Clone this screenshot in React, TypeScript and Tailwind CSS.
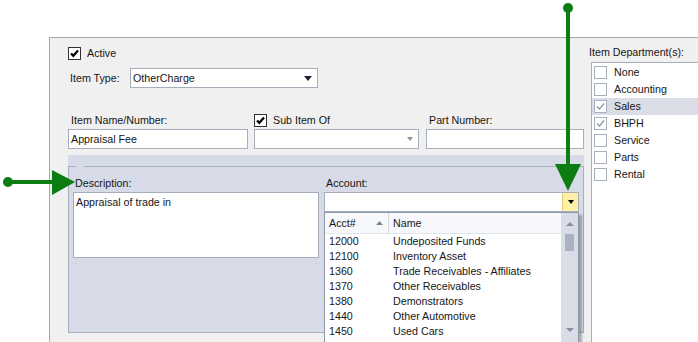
import React from "react"

const departments = [
  { name: "None", checked: false },
  { name: "Accounting", checked: false },
  { name: "Sales", checked: true, selected: true },
  { name: "BHPH", checked: true },
  { name: "Service", checked: false },
  { name: "Parts", checked: false },
  { name: "Rental", checked: false },
]

const accounts = [
  ["12000", "Undeposited Funds"],
  ["12100", "Inventory Asset"],
  ["1360", "Trade Receivables - Affiliates"],
  ["1370", "Other Receivables"],
  ["1380", "Demonstrators"],
  ["1440", "Other Automotive"],
  ["1450", "Used Cars"],
]

function CheckBox({ checked, muted }: { checked: boolean; muted?: boolean }) {
  return (
    <div
      className={`w-[13px] h-[13px] shrink-0 bg-white border ${
        muted ? "border-[#a9b0bd]" : "border-[#333333]"
      }`}
    >
      {checked && (
        <svg width="11" height="11" viewBox="0 0 11 11">
          {muted ? (
            <path d="M2 5.5 L4.5 8 L9 2.5" fill="none" stroke="#8c95a5" strokeWidth="1.2" />
          ) : (
            <path d="M2 5.5 L4.3 7.8 L9 2.5" fill="none" stroke="#000" strokeWidth="2.2" />
          )}
        </svg>
      )}
    </div>
  )
}

function Arrows() {
  return (
    <svg
      className="absolute inset-0 pointer-events-none"
      width="698"
      height="342"
      viewBox="0 0 698 342"
    >
      <g fill="#0c7d12" stroke="#0c7d12">
        <circle cx="568" cy="8" r="5" stroke="none" />
        <line x1="568" y1="8" x2="568" y2="168" strokeWidth="4" />
        <polygon points="555,164 581,164 568,191" stroke="none" />
        <circle cx="8" cy="182" r="5" stroke="none" />
        <line x1="8" y1="182" x2="54" y2="182" strokeWidth="4" />
        <polygon points="52,170 52,195 75,182" stroke="none" />
      </g>
    </svg>
  )
}

export default function App() {
  return (
    <div className="relative w-[698px] h-[342px] overflow-hidden bg-white pt-[37px] pl-[49px] font-['Liberation_Sans',Arial,sans-serif] text-[10.7px] leading-[13px] text-[#161616]">
      <div className="h-[305px] flex border-t border-l border-[#a3aab7] bg-[#f0f0f0]">
        {/* main form */}
        <div className="w-[534px] shrink-0 flex flex-col">
          <div className="mt-[9px] ml-[18px] h-[13px] flex items-center gap-[6px]">
            <CheckBox checked />
            <span>Active</span>
          </div>

          <div className="mt-[8px] ml-[20px] h-[20px] flex items-center">
            <span className="w-[60px]">Item Type:</span>
            <div className="w-[188px] h-[20px] flex items-center justify-between bg-white border border-[#a6aebb] pl-[2px] pr-[5px]">
              <span>OtherCharge</span>
              <svg width="8" height="5" viewBox="0 0 8 5">
                <polygon points="0,0 8,0 4,5" fill="#1c2533" />
              </svg>
            </div>
          </div>

          <div className="mt-[25px] ml-[18px] h-[14px] flex items-center">
            <span className="w-[186px] pl-[3px]">Item Name/Number:</span>
            <div className="w-[172px] flex items-center gap-[6px]">
              <CheckBox checked />
              <span>Sub Item Of</span>
            </div>
            <span className="pl-[3px]">Part Number:</span>
          </div>

          <div className="mt-[2px] ml-[18px] h-[20px] flex">
            <div className="w-[180px] h-[20px] flex items-center bg-white border border-[#a6aebb] pl-[2px]">
              Appraisal Fee
            </div>
            <div className="ml-[6px] w-[165px] h-[20px] flex items-center justify-end bg-white border border-[#a6aebb] pr-[5px]">
              <svg width="6" height="4" viewBox="0 0 6 4">
                <polygon points="0,0 6,0 3,4" fill="#8a93a3" />
              </svg>
            </div>
            <div className="ml-[7px] w-[158px] h-[20px] bg-white border border-[#a6aebb]" />
          </div>

          <div className="mt-[6px] ml-[18px] w-[516px] h-[178px] bg-[#d6dbe7] pt-[11px]">
            <div className="w-[516px] h-[167px] border-l border-r border-b border-[#a8afbd] flex flex-col">
              <div className="h-px flex">
                <div className="w-[7px] bg-[#a8afbd]" />
                <div className="w-[8px]" />
                <div className="flex-1 bg-[#a8afbd]" />
              </div>
              <div className="mt-[10px] h-[13px] flex">
                <span className="ml-[6px] w-[251px]">Description:</span>
                <span>Account:</span>
              </div>
              <div className="mt-[2px] flex items-start">
                <div className="ml-[4px] w-[246px] h-[66px] bg-white border border-[#a6aebb] px-[2px] pt-[3px]">
                  Appraisal of trade in
                </div>
                <div className="relative ml-[5px] w-[255px] h-[20px] flex bg-white border border-[#a6aebb]">
                  <div className="flex-1" />
                  <div className="w-[16px] h-[18px] flex items-center justify-center bg-[#fef0a6] border-l border-[#e3cd7d]">
                    <svg width="6" height="4" viewBox="0 0 6 4">
                      <polygon points="0,0 6,0 3,4" fill="#000" />
                    </svg>
                  </div>

                  {/* dropdown popup */}
                  <div className="absolute left-[-1px] top-[19px] w-[255px] h-[140px] flex bg-white border-l border-r border-t border-[#8f98aa] shadow-[3px_3px_2px_rgba(0,0,0,0.28)]">
                    <div className="w-[236px] flex flex-col">
                      <div className="h-[21px] flex bg-[#f7f8fb] border-b border-[#e1e5ec]">
                        <div className="w-[64px] flex items-center justify-between pl-[4px] pr-[5px] border-r border-[#d3d8e1]">
                          <span>Acct#</span>
                          <svg width="7" height="4" viewBox="0 0 7 4">
                            <polygon points="0,4 7,4 3.5,0" fill="#7b8494" />
                          </svg>
                        </div>
                        <span className="flex items-center pl-[4px]">Name</span>
                      </div>
                      {accounts.map(([num, name]) => (
                        <div key={num} className="h-[15px] flex items-center">
                          <span className="w-[64px] pl-[4px]">{num}</span>
                          <span className="pl-[4px]">{name}</span>
                        </div>
                      ))}
                    </div>
                    <div className="w-[17px] flex flex-col items-center bg-[#d9dde8]">
                      <div className="h-[21px] flex items-center justify-center">
                        <svg width="8" height="4" viewBox="0 0 8 4">
                          <polygon points="0,4 8,4 4,0" fill="#8690a2" />
                        </svg>
                      </div>
                      <div className="w-[9px] h-[17px] bg-[#aab2c3]" />
                      <div className="mt-[76px] h-[6px] flex items-center justify-center">
                        <svg width="8" height="4" viewBox="0 0 8 4">
                          <polygon points="0,0 8,0 4,4" fill="#8690a2" />
                        </svg>
                      </div>
                    </div>
                  </div>
                </div>
              </div>
            </div>
          </div>
        </div>

        {/* departments */}
        <div className="flex-1 flex flex-col">
          <span className="mt-[8px] ml-[5px] h-[13px]">Item Department(s):</span>
          <div className="mt-[3px] ml-[7px] flex-1 bg-white border-l border-t border-[#a6aebb] pt-px">
            {departments.map((d) => (
              <div
                key={d.name}
                className={`h-[17px] flex items-center ${d.selected ? "bg-[#dadde5]" : ""}`}
              >
                <div className="ml-[2px]">
                  <CheckBox checked={d.checked} muted />
                </div>
                <span className="ml-[7px]">{d.name}</span>
              </div>
            ))}
          </div>
        </div>
      </div>
      <Arrows />
    </div>
  )
}
